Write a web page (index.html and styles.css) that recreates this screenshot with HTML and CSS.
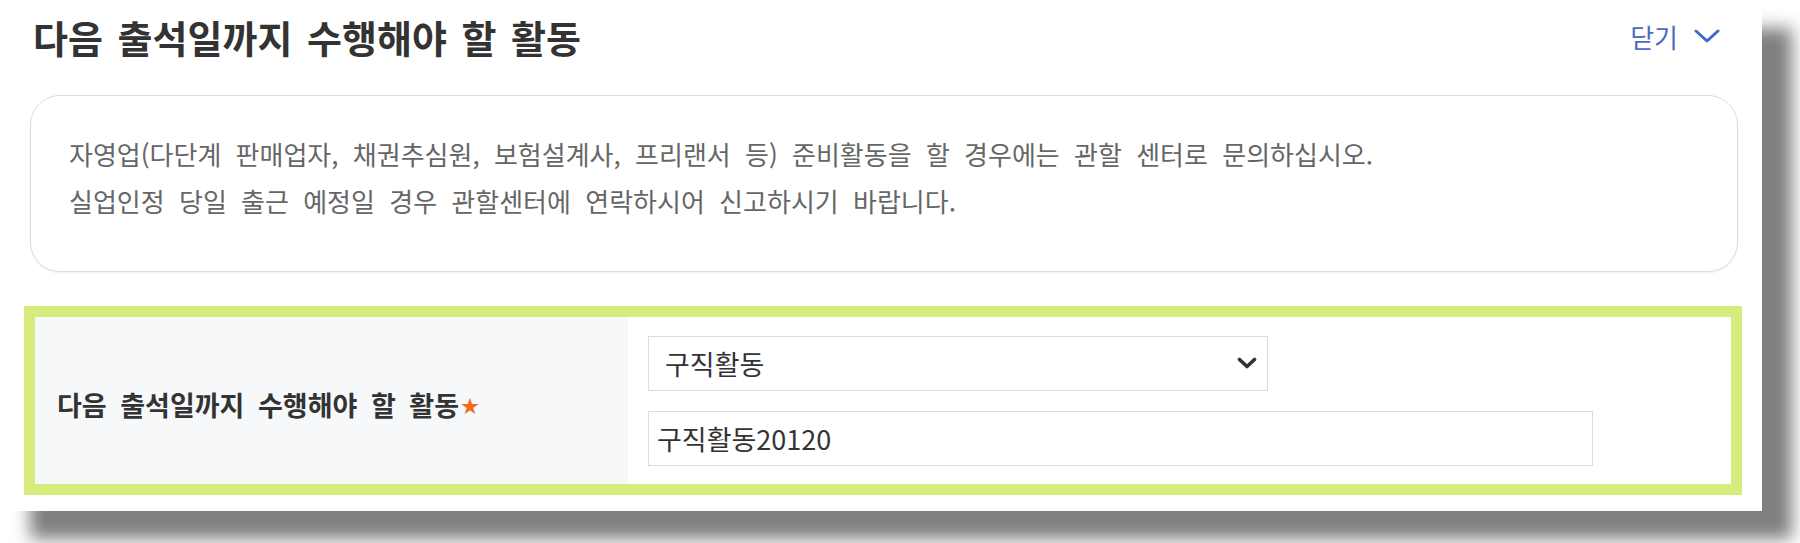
FILE: index.html
```
<!DOCTYPE html>
<html lang="ko">
<head>
    <meta charset="UTF-8">
    <meta name="viewport" content="width=device-width, initial-scale=1.0">
    <title>다음 출석일까지 수행해야 할 활동</title>
    <link rel="stylesheet" href="styles.css">
</head>
<body>
    <div class="panel">
        <div class="panel-head">
            <h2>다음 출석일까지 수행해야 할 활동</h2>
            <button class="toggle" type="button">
                닫기
                <svg width="26" height="14" viewBox="0 0 26 14"><path d="M2 2 L13 12 L24 2" fill="none" stroke="#3d6cc9" stroke-width="3" stroke-linecap="round" stroke-linejoin="round"/></svg>
            </button>
        </div>

        <div class="notice">
            <p>자영업(다단계 판매업자, 채권추심원, 보험설계사, 프리랜서 등) 준비활동을 할 경우에는 관할 센터로 문의하십시오.</p>
            <p>실업인정 당일 출근 예정일 경우 관할센터에 연락하시어 신고하시기 바랍니다.</p>
        </div>

        <div class="form-row">
            <div class="form-label">다음 출석일까지 수행해야 할 활동<span class="required">★</span></div>
            <div class="form-field">
                <div class="select-wrap">
                    <select id="activity-type">
                        <option value="job">구직활동</option>
                    </select>
                    <svg class="select-arrow" width="20" height="12" viewBox="0 0 20 12"><path d="M2.5 2.5 L10 9.5 L17.5 2.5" fill="none" stroke="#333" stroke-width="3.6" stroke-linecap="round" stroke-linejoin="round"/></svg>
                </div>
                <input type="text" id="activity-text" value="구직활동20120">
            </div>
        </div>
    </div>
</body>
</html>
```

FILE: styles.css
```
:root {
    --text: #333;
    --muted: #666;
    --line: #dcdcdc;
    --blue: #4a6bbf;
    --highlight: #d6ec7c;
    --label-bg: #f7f8fa;
}

body {
    margin: 0;
    padding-bottom: 32px;
    background: #fff;
    font-family: "Noto Sans CJK KR", "Noto Sans", sans-serif;
    color: var(--text);
}

.panel {
    width: 1762px;
    height: 511px;
    box-sizing: border-box;
    padding: 0 20px 0 24px;
    background: #fff;
    box-shadow: 30px 28px 16px rgba(0, 0, 0, 0.5);
}

.panel-head {
    display: flex;
    justify-content: space-between;
    align-items: center;
    height: 72px;
    padding: 0 22px 0 9px;
}

.panel-head h2 {
    margin: 0;
    font-size: 38px;
    font-weight: 700;
    word-spacing: 4px;
    color: var(--text);
}

.toggle {
    display: flex;
    align-items: center;
    gap: 16px;
    padding: 0;
    border: none;
    background: none;
    font-family: inherit;
    font-size: 26px;
    color: var(--blue);
    cursor: pointer;
}

.notice {
    margin: 23px 4px 0 6px;
    height: 177px;
    box-sizing: border-box;
    padding: 34px 38px 0;
    border: 1.5px solid var(--line);
    border-radius: 30px;
    box-shadow: 0 1px 2px rgba(0, 0, 0, 0.08);
}

.notice p {
    margin: 0;
    font-size: 26px;
    line-height: 47px;
    word-spacing: 7px;
    color: var(--muted);
}

.form-row {
    display: flex;
    margin-top: 34px;
    height: 189px;
    box-sizing: border-box;
    border: 11px solid var(--highlight);
}

.form-label {
    display: flex;
    align-items: center;
    width: 593px;
    padding: 8px 0 0 22px;
    box-sizing: border-box;
    background: var(--label-bg);
    font-size: 27px;
    font-weight: 700;
    word-spacing: 6px;
}

.required {
    margin-left: 2px;
    font-size: 18px;
    color: #f26b22;
}

.form-field {
    flex: 1;
    display: flex;
    flex-direction: column;
    gap: 20px;
    padding: 19px 20px 0;
}

.select-wrap {
    position: relative;
    width: 620px;
}

.form-field select,
.form-field input {
    display: block;
    height: 55px;
    box-sizing: border-box;
    border: 1.5px solid var(--line);
    background: #fff;
    font-family: inherit;
    font-size: 27px;
    color: var(--text);
    outline: none;
}

.form-field select {
    width: 100%;
    padding: 0 50px 0 16px;
    appearance: none;
    border-radius: 0;
}

.select-arrow {
    position: absolute;
    right: 11px;
    top: 21px;
}

.form-field input {
    width: 945px;
    padding: 0 8px;
}
```
